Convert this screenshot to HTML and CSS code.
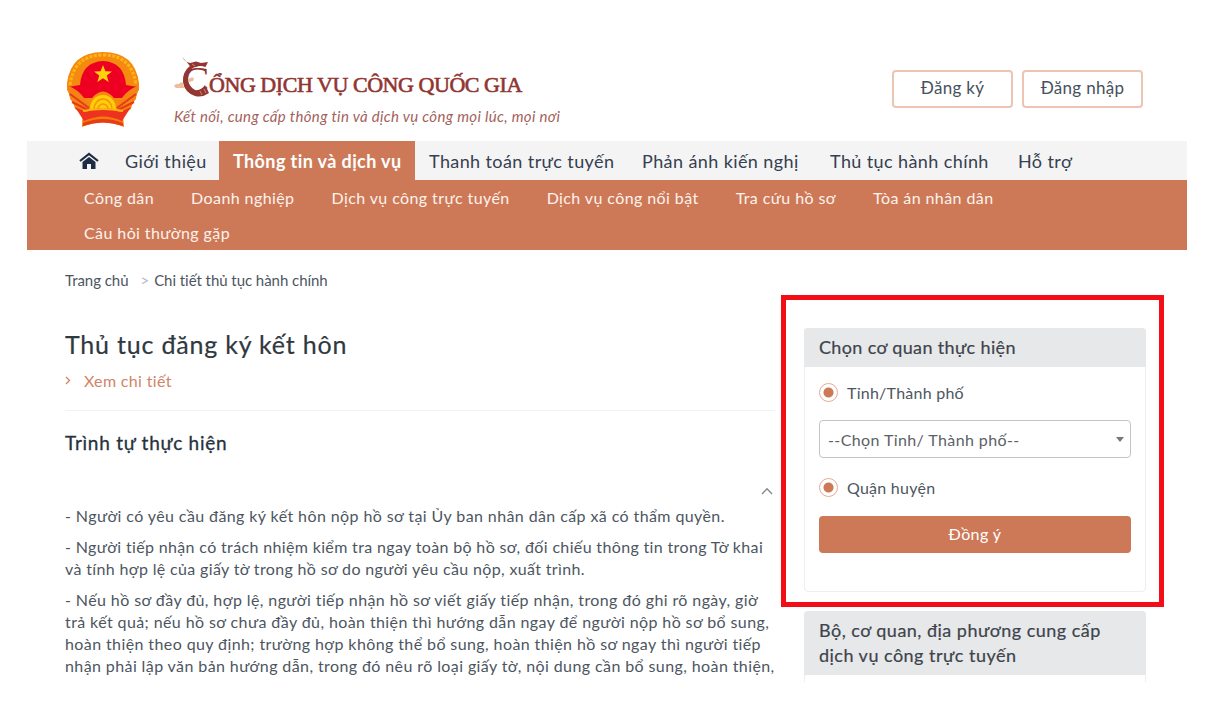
FILE: index.html
```html
<!DOCTYPE html>
<html lang="vi">
<head>
    <meta charset="UTF-8">
    <meta name="viewport" content="width=device-width, initial-scale=1.0">
    <title>Cổng Dịch vụ công Quốc gia</title>
    <link rel="stylesheet" href="styles.css">
</head>
<body>
    <div class="page">
        <header class="header">
            <svg class="emblem" width="76" height="78" viewBox="0 0 76 78">
                <path d="M17 54 L16 76 Q37 67 58 76 L56 54 Z" fill="#f47b10"/>
                <path d="M1 32 Q5 1 37 1 Q69 1 73 32 L73 39 Q70 42 70 48 Q66 52 65 58 L52 66 H22 L9 58 Q8 52 4 48 Q4 42 1 39 Z" fill="#f58a10"/>
                <path d="M4 34 Q8 4 37 4 Q66 4 70 34" fill="none" stroke="#ffb515" stroke-width="3" stroke-dasharray="3 1.5"/>
                <path d="M14 34 Q16 11 37 10 Q58 11 60 34 L72 36 L62 47 L48 47 Q37 34 26 47 L12 47 L2 36 Z" fill="#ee0022"/>
                <path d="M1 35 Q14 37 25 58 L17 63 Q4 54 1 35 Z M73 35 Q60 37 49 58 L57 63 Q70 54 73 35 Z" fill="#f58414"/>
                <path d="M4 43 L23 57 M6 51 L24 60 M70 43 L51 57 M68 51 L50 60" stroke="#e63b18" stroke-width="2"/>
                <path d="M24 58 a13 14 0 0 1 26 0 Z" fill="#ffce08"/>
                <path d="M28 58 a9 10 0 0 1 18 0 M32 58 a5 5 0 0 1 10 0" fill="none" stroke="#f6930d" stroke-width="1.5"/>
                <path d="M9 56 L20 61 Q37 53 54 61 L65 56 L56 70 Q37 61 18 70 Z" fill="#ed3220"/>
                <path d="M17 60 Q37 56 57 60" fill="none" stroke="#ffb510" stroke-width="2"/>
                <path d="M17 72 Q37 64 57 72 L57 75 Q37 68 17 75 Z" fill="#e83c19"/>
                <path d="M37 14 L39.4 20.2 L46 20.400 L40.800 24.400 L42.600 31 L37 27.200 L31.400 31 L33.200 24.400 L28 20.400 L34.600 20.200 Z" fill="#ffd20a"/>
            </svg>
            <div class="brand">
                <div class="brand-title">
                    <span class="brand-initial">C
                        <svg class="dragon" width="40" height="44" viewBox="0 0 40 44">
                            <path d="M8 2 Q11 7 16 8 L22 6.500 L27 8 L34 7 L31.500 12 Q26 10 22 12 L17 13 Q15 9 8 2 Z" fill="#933530"/>
                            <path d="M17 10 Q8 17 9 27 Q11 38 21 41 Q28 43 35 38 L31 30 Q27 36 21 35 Q14 31 14 23 Q14 16 20 12 Z" fill="#933530"/>
                            <path d="M0 31 Q2 28 5 29 Q7 26 9 28 L10 33 L2 33 Z M14.500 24 Q17 21.500 20 23 L19 26 L15 27 Z" fill="#f0bb9c"/>
                            <path d="M26 36 L28 40 M30 34 L32 38 M18 9 L21 11" stroke="#d58b70"/>
                        </svg>
                    </span><span class="brand-name">ỔNG DỊCH VỤ CÔNG QUỐC GIA</span>
                </div>
                <div class="brand-slogan">Kết nối, cung cấp thông tin và dịch vụ công mọi lúc, mọi nơi</div>
            </div>
            <div class="account">
                <button type="button" class="btn-outline">Đăng ký</button>
                <button type="button" class="btn-outline">Đăng nhập</button>
            </div>
        </header>

        <nav class="main-nav">
            <a class="home">
                <svg width="20" height="18" viewBox="0 0 20 18">
                    <path d="M1 9 L10 1.800 L19 9" fill="none" stroke="#1c2c42" stroke-width="2.200"/>
                    <path d="M3.500 10 L10 5 L16.500 10 V17 H12 V12 H8 V17 H3.500 Z" fill="#1c2c42"/>
                </svg>
            </a>
            <a>Giới thiệu</a>
            <a class="active">Thông tin và dịch vụ</a>
            <a>Thanh toán trực tuyến</a>
            <a>Phản ánh kiến nghị</a>
            <a>Thủ tục hành chính</a>
            <a>Hỗ trợ</a>
        </nav>
        <nav class="sub-nav">
            <a>Công dân</a>
            <a>Doanh nghiệp</a>
            <a>Dịch vụ công trực tuyến</a>
            <a>Dịch vụ công nổi bật</a>
            <a>Tra cứu hồ sơ</a>
            <a>Tòa án nhân dân</a>
            <a>Câu hỏi thường gặp</a>
        </nav>

        <div class="breadcrumb">
            <span>Trang chủ</span>
            <span class="sep">&gt;</span>
            <span>Chi tiết thủ tục hành chính</span>
        </div>

        <div class="content">
            <main class="procedure">
                <h1>Thủ tục đăng ký kết hôn</h1>
                <a class="detail-link">
                    <svg width="6" height="9" viewBox="0 0 6 9"><path d="M1 1 L4.500 4.500 L1 8" fill="none" stroke="#d18466" stroke-width="1.300"/></svg>
                    <span>Xem chi tiết</span>
                </a>
                <h2>Trình tự thực hiện</h2>
                <div class="collapse">
                    <svg width="12" height="8" viewBox="0 0 12 8"><path d="M1 7 L6 1.800 L11 7" fill="none" stroke="#858b92" stroke-width="1.400"/></svg>
                </div>
                <p>- Người có yêu cầu đăng ký kết hôn nộp hồ sơ tại Ủy ban nhân dân cấp xã có thẩm quyền.</p>
                <p class="tight">- Người tiếp nhận có trách nhiệm kiểm tra ngay toàn bộ hồ sơ, đối chiếu thông tin trong Tờ khai<br>
                và tính hợp lệ của giấy tờ trong hồ sơ do người yêu cầu nộp, xuất trình.</p>
                <p>- Nếu hồ sơ đầy đủ, hợp lệ, người tiếp nhận hồ sơ viết giấy tiếp nhận, trong đó ghi rõ ngày, giờ<br>
                trả kết quả; nếu hồ sơ chưa đầy đủ, hoàn thiện thì hướng dẫn ngay để người nộp hồ sơ bổ sung,<br>
                hoàn thiện theo quy định; trường hợp không thể bổ sung, hoàn thiện hồ sơ ngay thì người tiếp<br>
                nhận phải lập văn bản hướng dẫn, trong đó nêu rõ loại giấy tờ, nội dung cần bổ sung, hoàn thiện,</p>
            </main>

            <aside class="sidebar">
                <div class="highlight">
                    <section class="card">
                        <h3>Chọn cơ quan thực hiện</h3>
                        <form class="card-body">
                            <label class="radio"><span class="dot"></span>Tỉnh/Thành phố</label>
                            <div class="select"><span>--Chọn Tỉnh/ Thành phố--</span><span class="caret"></span></div>
                            <label class="radio"><span class="dot"></span>Quận huyện</label>
                            <button type="button" class="btn-submit">Đồng ý</button>
                        </form>
                    </section>
                </div>
                <section class="card agencies">
                    <h3>Bộ, cơ quan, địa phương cung cấp<br>dịch vụ công trực tuyến</h3>
                </section>
            </aside>
        </div>
    </div>
</body>
</html>
```
FILE: styles.css
```css
* {
    box-sizing: border-box;
}

body {
    margin: 0;
    background-color: #fff;
    font-family: Lato, "Open Sans", "Noto Sans", sans-serif;
    color: #4d565f;
}

.page {
    width: 1160px;
    height: 682px;
    margin-left: 27px;
    overflow: hidden;
    white-space: nowrap;
}

.header {
    display: flex;
    height: 141px;
    padding: 51px 44px 0 39px;
}

.emblem {
    flex: none;
}

.brand {
    margin-left: 32px;
}

.brand-title {
    display: flex;
    height: 52px;
    font-family: "Liberation Serif", serif;
    color: #903532;
}

.brand-initial {
    position: relative;
    width: 35px;
    padding-left: 8px;
    font-size: 41px;
    line-height: 58px;
}

.dragon {
    position: absolute;
    left: 0;
    top: 4px;
}

.brand-name {
    font-size: 22px;
    line-height: 67px;
    letter-spacing: -0.45px;
    -webkit-text-stroke: 0.6px #903532;
}

.brand-slogan {
    font-size: 15px;
    font-style: italic;
    line-height: 26px;
    letter-spacing: 0.33px;
    color: #a55f5b;
}

.account {
    display: flex;
    gap: 9px;
    margin: 19px 0 0 auto;
}

.btn-outline {
    width: 121px;
    height: 38px;
    padding: 0 0 3px;
    border: 2px solid #ecc4b4;
    border-radius: 4px;
    background-color: #fff;
    font: 17px Lato, sans-serif;
    letter-spacing: 0.3px;
    color: #46515d;
}

.main-nav {
    display: grid;
    grid-template-columns: 46px 108px 196px 213px 188px 188px auto;
    height: 39px;
    padding-left: 38px;
    background-color: #f4f4f4;
    font-size: 18px;
    line-height: 41px;
    letter-spacing: 0.4px;
    color: #344050;
}

.main-nav a {
    padding-left: 14px;
}

.main-nav .home {
    padding-top: 2px;
}

.main-nav .active {
    background-color: #cd7957;
    font-weight: bold;
    color: #fff;
}

.sub-nav {
    display: flex;
    flex-wrap: wrap;
    column-gap: 37px;
    height: 70px;
    padding: 0 150px 0 57px;
    background-color: #cd7957;
    font-size: 16px;
    line-height: 35px;
    letter-spacing: 0.41px;
    color: #fdf2ec;
}

.breadcrumb {
    display: flex;
    height: 45px;
    padding: 20px 0 0 38px;
    font-size: 15px;
    line-height: 20px;
    letter-spacing: -0.05px;
}

.breadcrumb .sep {
    margin: 0 5px 0 12px;
    color: #b5b9bd;
}

.content {
    display: flex;
    padding-left: 38px;
}

.procedure {
    width: 716px;
    padding-top: 31px;
}

h1 {
    margin: 0;
    font-size: 25px;
    font-weight: normal;
    line-height: 36px;
    letter-spacing: 0.8px;
    color: #303840;
    -webkit-text-stroke: 0.2px #303840;
}

.detail-link {
    display: flex;
    align-items: center;
    gap: 13px;
    width: 710px;
    height: 49px;
    padding-bottom: 11px;
    border-bottom: 1px solid #eff2f6;
    font-size: 16px;
    letter-spacing: 0.35px;
    color: #d18466;
}

h2 {
    margin: 18px 0 0;
    font-size: 19px;
    font-weight: normal;
    line-height: 28px;
    letter-spacing: 0.75px;
    color: #26313d;
    -webkit-text-stroke: 0.3px #26313d;
}

.collapse {
    display: flex;
    justify-content: flex-end;
    height: 48px;
    padding: 30px 8px 0 0;
}

.procedure p {
    margin: 0 0 9px;
    font-size: 16px;
    line-height: 22px;
    letter-spacing: 0.4px;
}

.procedure .tight {
    letter-spacing: 0.35px;
}

.sidebar {
    width: 383px;
}

.highlight {
    height: 312px;
    padding: 28px 13px 0 18px;
    border: 5px solid #f20d17;
}

.card {
    border: 1px solid #edeef0;
    border-radius: 4px;
}

.card h3 {
    margin: -1px;
    padding: 7px 15px;
    border-radius: 4px 4px 0 0;
    background-color: #e7e8ea;
    font-size: 18px;
    font-weight: normal;
    line-height: 25px;
    letter-spacing: 0.35px;
    color: #3d444b;
    -webkit-text-stroke: 0.2px #3d444b;
}

.card-body {
    height: 225px;
    padding: 15px 14px 0;
}

.radio {
    display: flex;
    align-items: center;
    gap: 9px;
    height: 22px;
    font-size: 16px;
    letter-spacing: 0.25px;
}

.dot {
    width: 19px;
    height: 19px;
    border: 1.5px solid #e5ab93;
    border-radius: 50%;
    background: radial-gradient(circle, #cd7957 4.5px, #fff 5.5px);
}

.select {
    display: flex;
    align-items: center;
    justify-content: space-between;
    height: 38px;
    margin: 17px 0 18px;
    padding: 0 6px 0 8px;
    border: 1px solid #c4c4c4;
    border-radius: 4px;
    font-size: 16px;
    letter-spacing: 0.4px;
    color: #5c6166;
}

.caret {
    border: 4px solid transparent;
    border-top: 5px solid #777;
    border-bottom: 0;
}

.btn-submit {
    width: 100%;
    height: 37px;
    margin-top: 18px;
    padding: 0 0 3px;
    border: 0;
    border-radius: 4px;
    background-color: #cd7957;
    font: 16px Lato, sans-serif;
    letter-spacing: 0.4px;
    color: #fff;
}

.agencies {
    height: 90px;
    margin: 4px 18px 0 23px;
}

.agencies h3 {
    letter-spacing: 0.48px;
}
```
